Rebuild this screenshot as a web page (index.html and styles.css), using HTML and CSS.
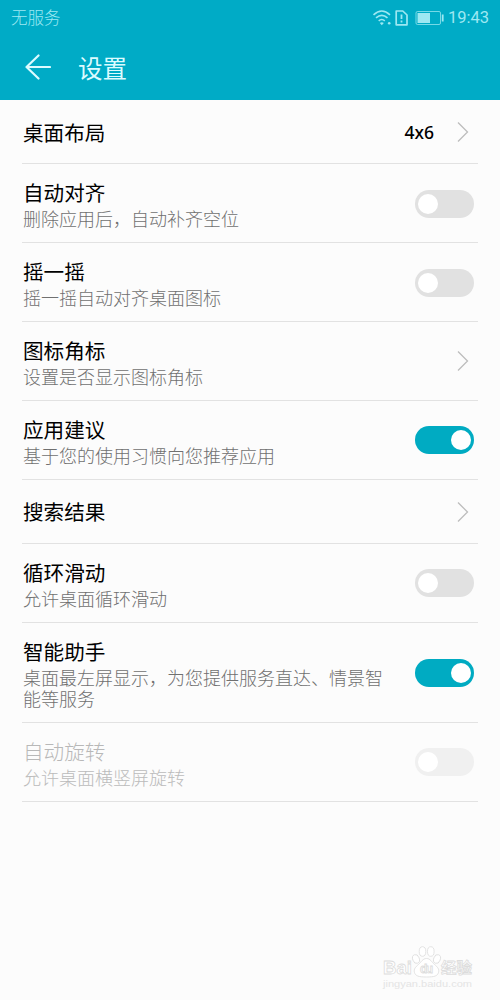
FILE: index.html
```
<!DOCTYPE html>
<html lang="zh-CN">
<head>
    <meta charset="UTF-8">
    <meta name="viewport" content="width=device-width, initial-scale=1.0">
    <title>设置</title>
    <link rel="stylesheet" href="styles.css">
</head>
<body>
    <header class="header">
        <div class="status-bar">
            <span class="carrier">无服务</span>
            <svg class="status-icons" width="72" height="18" viewBox="0 0 72 18" fill="none" stroke="currentColor">
                <!-- wifi -->
                <g stroke-width="1.6">
                    <path d="M1.5 5.8Q9.8-1.8 18 5.8"/>
                    <path d="M4 8.900Q9.800 3.700 15.500 8.900"/>
                    <path d="M6.7 11.800Q9.800 9.200 12.800 11.800"/>
                </g>
                <path d="M7.800 14Q9.800 12.600 11.800 14L9.800 16.200z" fill="currentColor" stroke="none"/>
                <circle cx="17.2" cy="14.2" r="1.3" fill="currentColor" stroke="none"/>
                <!-- sim -->
                <path d="M24.2 2h6.600l4.200 4v9.800H24.200z" stroke-width="1.7" stroke-linejoin="round"/>
                <path d="M29.5 5.600v4.400M29.500 11.400v2" stroke-width="1.8"/>
                <!-- battery -->
                <rect x="44" y="2.500" width="24.500" height="13" rx="1.5" stroke-width="1" opacity=".75"/>
                <path d="M45.500 4h12.500v10H45.500z" fill="currentColor" stroke="none"/>
                <path d="M70.7 5.500v7" stroke-width="1.8"/>
            </svg>
            <span class="time">19:43</span>
        </div>
        <div class="title-bar">
            <svg class="back" width="26" height="26" viewBox="0 0 26 26" fill="none" stroke="currentColor" stroke-width="2.2" stroke-linecap="round" stroke-linejoin="round">
                <path d="M13.500 1.500L1.500 13L13.500 24.500M1.500 13H25"/>
            </svg>
            <h1>设置</h1>
        </div>
    </header>

    <main class="list">
        <div class="item item-single">
            <div class="text"><h2>桌面布局</h2></div>
            <span class="value">4x6</span>
            <svg class="arrow" width="12" height="22" viewBox="0 0 12 22"><path d="M1 1.5L10.5 11L1 20.5"/></svg>
        </div>
        <div class="item">
            <div class="text">
                <h2>自动对齐</h2>
                <p>删除应用后，自动补齐空位</p>
            </div>
            <span class="switch"></span>
        </div>
        <div class="item">
            <div class="text">
                <h2>摇一摇</h2>
                <p>摇一摇自动对齐桌面图标</p>
            </div>
            <span class="switch"></span>
        </div>
        <div class="item">
            <div class="text">
                <h2>图标角标</h2>
                <p>设置是否显示图标角标</p>
            </div>
            <svg class="arrow" width="12" height="22" viewBox="0 0 12 22"><path d="M1 1.5L10.5 11L1 20.5"/></svg>
        </div>
        <div class="item">
            <div class="text">
                <h2>应用建议</h2>
                <p>基于您的使用习惯向您推荐应用</p>
            </div>
            <span class="switch on"></span>
        </div>
        <div class="item item-single">
            <div class="text"><h2>搜索结果</h2></div>
            <svg class="arrow" width="12" height="22" viewBox="0 0 12 22"><path d="M1 1.5L10.5 11L1 20.5"/></svg>
        </div>
        <div class="item">
            <div class="text">
                <h2>循环滑动</h2>
                <p>允许桌面循环滑动</p>
            </div>
            <span class="switch"></span>
        </div>
        <div class="item item-long">
            <div class="text">
                <h2>智能助手</h2>
                <p>桌面最左屏显示，为您提供服务直达、情景智能等服务</p>
            </div>
            <span class="switch on"></span>
        </div>
        <div class="item disabled">
            <div class="text">
                <h2>自动旋转</h2>
                <p>允许桌面横竖屏旋转</p>
            </div>
            <span class="switch"></span>
        </div>
    </main>

    <footer class="watermark">
        <svg width="92" height="46" viewBox="0 0 92 46">
            <g class="paw">
                <ellipse cx="34" cy="15" rx="3.3" ry="4.5" transform="rotate(-20 34 15)"/>
                <ellipse cx="40.5" cy="7.5" rx="3.3" ry="4.8"/>
                <ellipse cx="48.8" cy="7.5" rx="3.3" ry="4.8"/>
                <ellipse cx="55" cy="15" rx="3.3" ry="4.5" transform="rotate(20 55 15)"/>
                <path d="M44.5 14.5c-4 0-5 3.5-8 6s-5 4.5-4 8 4 4.5 12 4.5 11-1 12-4.5-1-5.5-4-8-4-6-8-6z"/>
            </g>
            <text class="brand" x="1" y="30" textLength="29" lengthAdjust="spacingAndGlyphs">Bai</text>
            <text class="du" x="38" y="29" textLength="13">du</text>
            <text class="brand-cn" x="59" y="28.5" textLength="31" lengthAdjust="spacingAndGlyphs">经验</text>
            <text class="site" x="1" y="43" textLength="89" lengthAdjust="spacingAndGlyphs">jingyan.baidu.com</text>
        </svg>
    </footer>
</body>
</html>
```
FILE: styles.css
```
* {
    box-sizing: border-box;
}
body {
    margin: 0;
    height: 1000px;
    display: flex;
    flex-direction: column;
    background-color: #fcfcfc;
    font-family: "Noto Sans CJK SC", sans-serif;
    color: #000;
}
h1, h2, p {
    margin: 0;
    font-weight: 400;
}
.header {
    height: 100px;
    background-color: #00abc6;
    color: #dcfbff;
}
.status-bar {
    display: flex;
    align-items: center;
    height: 35px;
    padding: 0 11px;
    color: #9de8f2;
}
.carrier {
    flex: 1;
    font-size: 16.5px;
    line-height: 24px;
    padding-bottom: 1px;
    font-weight: 300;
}
.time {
    width: 41px;
    margin-left: 4px;
    font-family: Roboto, sans-serif;
    font-size: 16.5px;
    white-space: nowrap;
}
.title-bar {
    display: flex;
    align-items: center;
    height: 64px;
    padding-left: 25px;
}
.title-bar h1 {
    margin-left: 27px;
    font-size: 24.5px;
}
.list {
    flex: 1;
    padding: 0 22px;
}
.item {
    display: flex;
    align-items: center;
    height: 78.8px;
    padding-right: 4px;
    border-bottom: 1px solid #e2e2e2;
}
.item-single {
    height: 64.4px;
    padding-top: 1px;
}
.item-long {
    height: 100px;
}
.text {
    width: 365px;
    padding-left: 1px;
    margin-right: auto;
}
.text h2 {
    font-size: 20.6px;
    line-height: 31px;
}
.text p {
    font-size: 18px;
    line-height: 21px;
    color: #707070;
    font-weight: 300;
}
.item-single .text {
    width: auto;
}
.value {
    margin-right: 23px;
    font-family: "Noto Sans", sans-serif;
    font-size: 17.5px;
    font-weight: 500;
}
.arrow {
    margin-right: 5px;
    fill: none;
    stroke: #bdbdbd;
    stroke-width: 1.3;
}
.switch {
    display: flex;
    width: 59px;
    height: 28px;
    margin-top: 1px;
    padding: 4px 3px;
    border-radius: 14px;
    background-color: #e1e1e1;
}
.switch::before {
    content: "";
    width: 20px;
    height: 20px;
    border-radius: 50%;
    background-color: #fff;
}
.switch.on {
    justify-content: flex-end;
    background-color: #00abc2;
}
.disabled .text h2 {
    color: #b8b8b8;
    font-weight: 300;
}
.disabled .text p {
    color: #bbb;
}
.disabled .switch {
    background-color: #f0f0f0;
}
.watermark {
    display: flex;
    justify-content: flex-end;
    height: 56px;
    padding-right: 26px;
}
.watermark text, .paw {
    fill: #fff;
    stroke: #dcdcdc;
    stroke-width: 0.8;
}
.brand {
    font: bold 19px "Liberation Sans", sans-serif;
}
.du {
    font: bold 12px "Liberation Sans", sans-serif;
}
.brand-cn {
    font: bold 15px "Liberation Sans", "Noto Sans CJK SC", sans-serif;
}
.watermark .site {
    font: 9.5px "Liberation Sans", sans-serif;
    fill: #e4e4e4;
    stroke: none;
}
```
